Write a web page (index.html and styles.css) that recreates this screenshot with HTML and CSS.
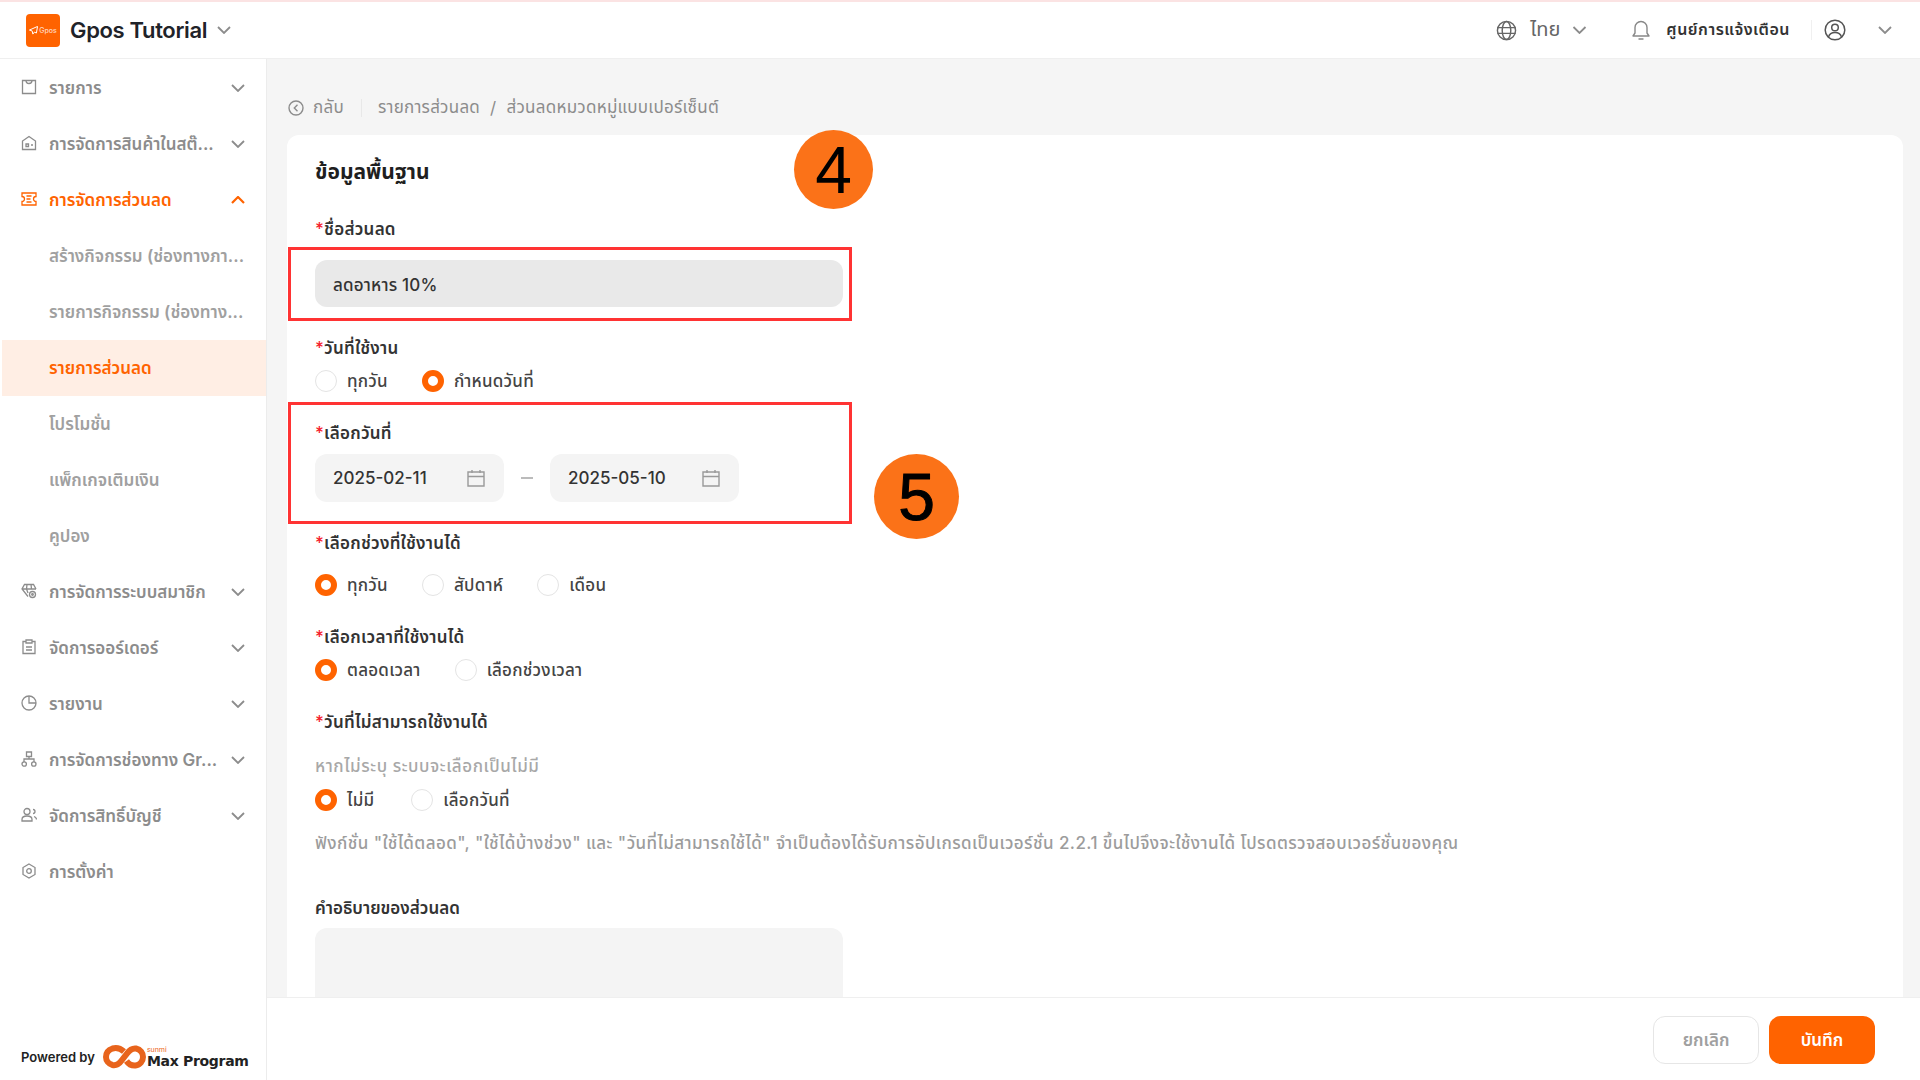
FILE: index.html
```html
<!DOCTYPE html>
<html lang="th">
<head>
<meta charset="utf-8">
<title>Gpos Tutorial</title>
<link rel="stylesheet" href="styles.css">
</head>
<body>
<div class="app">
  <header class="topbar">
    <div class="brand">
      <div class="logo">
        <svg class="logo-plane" viewBox="0 0 10 10"><path d="M9.500 .5 .5 4.500l3 1 .8 3.500 1.700-2.200 2.200 1z" fill="none" stroke="#fff" stroke-width="1.100" stroke-linejoin="round"/></svg>
        <span class="logo-text">Gpos</span>
      </div>
      <span class="brand-name">Gpos Tutorial</span>
      <svg class="chev chev-brand" viewBox="0 0 14 8"><path d="M1 1l6 6 6-6"/></svg>
    </div>
    <div class="top-actions">
      <svg class="top-icon" viewBox="0 0 22 22"><g fill="none" stroke="#666" stroke-width="1.500"><circle cx="11" cy="11" r="9.500"/><ellipse cx="11" cy="11" rx="4.500" ry="9.500"/><path d="M1.500 8h19M1.500 14h19"/></g></svg>
      <span class="lang">ไทย</span>
      <svg class="chev chev-lang" viewBox="0 0 14 8"><path d="M1 1l6 6 6-6"/></svg>
      <svg class="bell" viewBox="0 0 18 22"><path d="M1 17h16l-2-3V8.500a6 6 0 0 0-12 0V14zM7 20h4" fill="none" stroke="#888" stroke-width="1.400" stroke-linejoin="round" stroke-linecap="round"/></svg>
      <span class="notice">ศูนย์การแจ้งเตือน</span>
      <span class="top-divider"></span>
      <svg class="user" viewBox="0 0 22 22"><g fill="none" stroke="#555" stroke-width="1.500"><circle cx="11" cy="11" r="9.800"/><circle cx="11" cy="8.500" r="3.300"/><path d="M4.500 18c1-3.500 3.500-4.500 6.500-4.500s5.500 1 6.500 4.500"/></g></svg>
      <svg class="chev chev-user" viewBox="0 0 14 8"><path d="M1 1l6 6 6-6"/></svg>
    </div>
  </header>

  <div class="body-row">
    <aside class="sidebar">
      <nav class="menu">
        <a class="item"><svg class="mi" viewBox="0 0 16 16"><path d="M1.500 1.500h13v13h-13zM5 1.500c0 4 6 4 6 0"/></svg><span class="mt">รายการ</span><svg class="chev" viewBox="0 0 14 8"><path d="M1 1l6 6 6-6"/></svg></a>
        <a class="item"><svg class="mi" viewBox="0 0 16 16"><path d="M1.500 14.500V6L8 1.500 14.500 6v8.500zM5 9h2.500v2.500H5zM10 10h2"/></svg><span class="mt">การจัดการสินค้าในสต๊...</span><svg class="chev" viewBox="0 0 14 8"><path d="M1 1l6 6 6-6"/></svg></a>
        <a class="item item-open"><svg class="mi" viewBox="0 0 16 16"><path d="M1 2h14v3.500a2.500 2.500 0 0 0 0 5V14H1v-3.500a2.500 2.500 0 0 0 0-5zM5.500 5h5M5.500 8h4M5.500 11h5"/></svg><span class="mt">การจัดการส่วนลด</span><svg class="chev" viewBox="0 0 14 8"><path d="M1 7l6-6 6 6"/></svg></a>
        <a class="item sub"><span class="mt">สร้างกิจกรรม (ช่องทางภา...</span></a>
        <a class="item sub"><span class="mt">รายการกิจกรรม (ช่องทาง...</span></a>
        <a class="item sub sub-active"><span class="mt">รายการส่วนลด</span></a>
        <a class="item sub"><span class="mt">โปรโมชั่น</span></a>
        <a class="item sub"><span class="mt">แพ็กเกจเติมเงิน</span></a>
        <a class="item sub"><span class="mt">คูปอง</span></a>
        <a class="item"><svg class="mi" viewBox="0 0 16 16"><path d="M7 13.500 1 6l2.500-4.500h9L15 6M1 6h14M5.500 6 7 10M6 1.500 5.500 6M10 1.500l.500 4.500"/><circle cx="11.500" cy="11.500" r="3"/><circle cx="11.500" cy="11.500" r=".8"/></svg><span class="mt">การจัดการระบบสมาชิก</span><svg class="chev" viewBox="0 0 14 8"><path d="M1 1l6 6 6-6"/></svg></a>
        <a class="item"><svg class="mi" viewBox="0 0 16 16"><path d="M5 2.500H2v12h12v-12h-3M5 1h6v3H5zM5 8h6M5 11h6"/></svg><span class="mt">จัดการออร์เดอร์</span><svg class="chev" viewBox="0 0 14 8"><path d="M1 1l6 6 6-6"/></svg></a>
        <a class="item"><svg class="mi" viewBox="0 0 16 16"><circle cx="8" cy="8" r="7"/><path d="M8 1v7h7"/></svg><span class="mt">รายงาน</span><svg class="chev" viewBox="0 0 14 8"><path d="M1 1l6 6 6-6"/></svg></a>
        <a class="item"><svg class="mi" viewBox="0 0 16 16"><path d="M5.500 1h5v4.500h-5zM8 5.500V8M3 11V8h10v3"/><circle cx="3.200" cy="13" r="2.200"/><circle cx="12.800" cy="13" r="2.200"/></svg><span class="mt">การจัดการช่องทาง Gr...</span><svg class="chev" viewBox="0 0 14 8"><path d="M1 1l6 6 6-6"/></svg></a>
        <a class="item"><svg class="mi" viewBox="0 0 16 16"><circle cx="6" cy="4.500" r="3"/><path d="M1 14v-1.500c0-2 2-3.500 5-3.500s5 1.500 5 3.500V14zM12 2.500a2 2 0 0 1 0 4M13 9.500c1.500.5 2.500 1.500 2.500 3"/></svg><span class="mt">จัดการสิทธิ์บัญชี</span><svg class="chev" viewBox="0 0 14 8"><path d="M1 1l6 6 6-6"/></svg></a>
        <a class="item"><svg class="mi" viewBox="0 0 16 16"><path d="M8 1l6 3.500v7L8 15l-6-3.500v-7z"/><circle cx="8" cy="8" r="2.300"/></svg><span class="mt">การตั้งค่า</span></a>
      </nav>
      <div class="powered">
        <span class="powered-by">Powered by</span>
        <svg class="max-logo" viewBox="0 0 44 24"><path d="M21 6.500C17 3 13 2.500 9.500 3.500 5 5 3 8.500 3 12s2.500 7 6.500 8c4 .8 7-1.500 9.500-5l5-6.500c2.500-3.500 5-5.500 9-5 4.500 1 7 4.500 7 8.500s-3 8-7.500 8.500c-4 .3-7-1.500-9-4.500" fill="none" stroke="#e8641c" stroke-width="6"/></svg>
        <div class="max-text"><span class="sunmi">sunmi</span><span class="max-name">Max Program</span></div>
      </div>
    </aside>

    <main class="main">
      <div class="crumbs">
        <svg class="back" viewBox="0 0 16 16"><circle cx="8" cy="8" r="7" fill="none" stroke="#8c8c8c" stroke-width="1.400"/><path d="M9.500 4.800 6.300 8l3.200 3.200" fill="none" stroke="#8c8c8c" stroke-width="1.400"/></svg>
        <span class="back-text">กลับ</span>
        <span class="crumb-divider"></span>
        <span>รายการส่วนลด</span>
        <span class="crumb-sep">/</span>
        <span>ส่วนลดหมวดหมู่แบบเปอร์เซ็นต์</span>
      </div>
      <section class="card">
        <h2 class="card-title">ข้อมูลพื้นฐาน</h2>

        <div class="field field-first">
          <label class="label label-wide"><i>*</i>ชื่อส่วนลด</label>
          <div class="text-input">ลดอาหาร 10%</div>
        </div>

        <div class="field">
          <label class="label"><i>*</i>วันที่ใช้งาน</label>
          <div class="radios">
            <span class="radio"><b class="dot"></b>ทุกวัน</span>
            <span class="radio radio-long"><b class="dot on"></b>กำหนดวันที่</span>
          </div>
        </div>

        <div class="field field-date">
          <label class="label"><i>*</i>เลือกวันที่</label>
          <div class="dates">
            <div class="date"><span>2025-02-11</span><svg class="cal" viewBox="0 0 18 18"><path d="M1 3h16v14H1zM1 7.500h16M5 1v3M13 1v3" fill="none" stroke="#999" stroke-width="1.400"/></svg></div>
            <span class="dash"></span>
            <div class="date"><span>2025-05-10</span><svg class="cal" viewBox="0 0 18 18"><path d="M1 3h16v14H1zM1 7.500h16M5 1v3M13 1v3" fill="none" stroke="#999" stroke-width="1.400"/></svg></div>
          </div>
        </div>

        <div class="field">
          <label class="label label-range"><i>*</i>เลือกช่วงที่ใช้งานได้</label>
          <div class="radios">
            <span class="radio"><b class="dot on"></b>ทุกวัน</span>
            <span class="radio"><b class="dot"></b>สัปดาห์</span>
            <span class="radio"><b class="dot"></b>เดือน</span>
          </div>
        </div>

        <div class="field">
          <label class="label"><i>*</i>เลือกเวลาที่ใช้งานได้</label>
          <div class="radios">
            <span class="radio radio-medium"><b class="dot on"></b>ตลอดเวลา</span>
            <span class="radio"><b class="dot"></b>เลือกช่วงเวลา</span>
          </div>
        </div>

        <div class="field">
          <label class="label label-hint"><i>*</i>วันที่ไม่สามารถใช้งานได้</label>
          <div class="hint">หากไม่ระบุ ระบบจะเลือกเป็นไม่มี</div>
          <div class="radios">
            <span class="radio radio-short"><b class="dot on"></b>ไม่มี</span>
            <span class="radio"><b class="dot"></b>เลือกวันที่</span>
          </div>
          <div class="note">ฟังก์ชั่น "ใช้ได้ตลอด", "ใช้ได้บ้างช่วง" และ "วันที่ไม่สามารถใช้ได้" จำเป็นต้องได้รับการอัปเกรดเป็นเวอร์ชั่น 2.2.1 ขึ้นไปจึงจะใช้งานได้ โปรดตรวจสอบเวอร์ชั่นของคุณ</div>
        </div>

        <div class="field field-desc">
          <label class="label label-plain">คำอธิบายของส่วนลด</label>
          <div class="textarea"></div>
        </div>

        <div class="mark mark-name"></div>
        <div class="mark mark-date"></div>
        <div class="badge badge-4">4</div>
        <div class="badge badge-5">5</div>
      </section>
      <footer class="footer">
        <button class="btn btn-cancel">ยกเลิก</button>
        <button class="btn btn-save">บันทึก</button>
      </footer>
    </main>
  </div>
</div>
</body>
</html>
```

FILE: styles.css
```css
* { box-sizing: border-box; }
html, body { margin: 0; height: 100%; }
body {
  font-family: "Inter", "Noto Sans", "Noto Sans Thai", "DejaVu Sans", sans-serif;
  font-size: 17px;
  color: #262626;
  background: #fff;
  overflow: hidden;
}
.app { width: 1920px; height: 1080px; display: flex; flex-direction: column; border-top: 2px solid #fbe3e3; }

/* top bar */
.topbar { height: 57px; flex: none; display: flex; align-items: center; justify-content: space-between; border-bottom: 1px solid #efefef; padding: 0 28px 0 26px; }
.brand { display: flex; align-items: center; }
.logo { width: 34px; height: 33px; border-radius: 4px; background: #ff6300; display: flex; align-items: center; justify-content: center; gap: 1px; color: #fff; }
.logo-plane { width: 9px; height: 9px; }
.logo-text { font-size: 7px; color: #ffd9c2; font-weight: 500; }
.brand-name { margin-left: 10px; font-size: 22px; font-weight: 600; color: #1f2329; letter-spacing: -.35px; }
.chev { width: 14px; height: 8px; fill: none; stroke: #8c8c8c; stroke-width: 1.800; flex: none; }
.chev-brand { margin-left: 10px; }
.top-actions { display: flex; align-items: center; }
.top-icon { width: 21px; height: 21px; }
.lang { margin-left: 13px; color: #666; font-size: 20px; }
.chev-lang { margin-left: 12px; width: 15px; }
.bell { width: 18px; height: 22px; margin-left: 45px; }
.notice { margin-left: 16px; font-weight: 600; color: #333; font-size: 16px; letter-spacing: .5px; }
.top-divider { width: 1px; height: 20px; background: #f0f0f0; margin-left: 21px; }
.user { width: 22px; height: 22px; margin-left: 12px; }
.chev-user { margin-left: 32px; }

/* layout */
.body-row { flex: 1; display: flex; min-height: 0; }
.sidebar { width: 267px; flex: none; border-right: 1px solid #ececec; padding: 1px 0 0 2px; display: flex; flex-direction: column; justify-content: space-between; }
.menu { display: flex; flex-direction: column; }
.item { height: 56px; display: flex; align-items: center; padding: 0 21px 0 19px; color: #8c8c8c; font-weight: 600; font-size: 17px; white-space: nowrap; }
.mi { width: 16px; height: 16px; flex: none; margin: -2px 12px 0 0; fill: none; stroke: #8c8c8c; stroke-width: 1.300; }
.mt { flex: 1; min-width: 0; overflow: hidden; padding-top: 2px; }
.item-open { color: #ff6300; }
.item-open .mi, .item-open .chev { stroke: #ff6300; }
.item-open .chev { stroke-width: 2.200; }
.sub { padding-left: 47px; padding-right: 0; color: #a0a0a0; }
.sub-active { background: #ffeee4; color: #ff6300; }
.powered { height: 60px; display: flex; align-items: center; padding: 14px 0 0 19px; }
.powered-by { font-size: 13px; font-weight: 600; color: #222; }
.max-logo { width: 44px; height: 24px; margin-left: 8px; }
.max-text { display: flex; flex-direction: column; margin-left: 0; line-height: 1; }
.sunmi { font-size: 7px; color: #ec6417; margin-bottom: 1px; }
.max-name { font-family: "DejaVu Sans", sans-serif; font-size: 14px; font-weight: 700; color: #222; letter-spacing: -.3px; }

/* main */
.main { flex: 1; min-width: 0; background: #f5f5f5; padding: 38px 17px 0 20px; display: flex; flex-direction: column; position: relative; }
.crumbs { height: 20px; display: flex; align-items: center; color: #8c8c8c; font-size: 17px; letter-spacing: .25px; margin-bottom: 18px; flex: none; padding: 1px 0 0 1px; }
.back { width: 16px; height: 16px; margin-right: 9px; }
.crumb-divider { width: 1px; height: 18px; background: #e8e8e8; margin: 0 16px 0 17px; }
.crumb-sep { margin: 0 10px; }

.card { background: #fff; border-radius: 12px 12px 0 0; padding: 23px 28px 0; flex: 1; min-height: 0; position: relative; }
.card-title { margin: 0; font-size: 21px; line-height: 28px; font-weight: 700; color: #1f1f1f; }
.field { margin-top: 29px; }
.field-first { margin-top: 32px; margin-bottom: 30px; }
.field-date { margin-bottom: 30px; }
.field-desc { margin-top: 44px; }
.label { display: block; height: 20px; padding-top: 1px; line-height: 20px; font-weight: 600; color: #333; margin-bottom: 12px; letter-spacing: .25px; }
.label i { color: #f5222d; font-style: normal; font-weight: 500; }
.label-wide { margin-bottom: 22px; }
.label-range { margin-bottom: 21px; }
.label-hint { margin-bottom: 25px; }
.label-plain { margin-bottom: 11px; letter-spacing: 0; }
.text-input { width: 528px; height: 47px; border-radius: 12px; background: #e9e9e9; display: flex; align-items: center; padding: 4px 0 0 18px; color: #333; font-weight: 500; letter-spacing: .2px; }
.radios { display: flex; height: 24px; align-items: center; }
.radio { display: flex; align-items: center; font-weight: 500; color: #444; margin-right: 34px; padding-top: 2px; white-space: nowrap; letter-spacing: .25px; }
.radio-short { margin-right: 37px; }
.dot { width: 22px; height: 22px; border-radius: 50%; border: 1px solid #e4e4e4; margin: -2px 10px 0 0; background: #fff; flex: none; }
.dot.on { border: 6px solid #ff6300; }
.dates { display: flex; align-items: center; }
.date { width: 189px; height: 48px; border-radius: 12px; background: #f4f4f4; display: flex; align-items: center; justify-content: space-between; padding: 0 19px 0 18px; color: #333; font-weight: 500; }
.cal { width: 18px; height: 18px; }
.dash { width: 12px; height: 2px; background: #bbb; margin: 0 17px; }
.hint { line-height: 20px; color: #a8a8a8; font-weight: 500; margin-bottom: 12px; letter-spacing: .55px; }
.note { line-height: 20px; color: #9c9c9c; font-weight: 500; margin-top: 21px; white-space: nowrap; letter-spacing: .42px; }
.textarea { width: 528px; height: 140px; border-radius: 12px; background: #f4f4f4; }

/* annotations */
.mark { position: absolute; border: 3px solid #ff3333; width: 564px; }
.mark-name { left: 1px; top: 112px; height: 74px; }
.mark-date { left: 1px; top: 267px; height: 122px; }
.badge { position: absolute; border-radius: 50%; background: #fb7218; color: #000; font-family: "Liberation Sans", sans-serif; display: flex; align-items: center; justify-content: center; font-size: 66px; }
.badge-4 { left: 507px; top: -5px; width: 79px; height: 79px; }
.badge-5 { left: 587px; top: 319px; width: 85px; height: 85px; -webkit-text-stroke: 1px #000; }

/* footer */
.footer { position: absolute; left: 0; right: 0; bottom: 0; height: 83px; background: #fff; border-top: 1px solid #efefef; display: flex; align-items: center; justify-content: flex-end; padding: 2px 45px 0 0; gap: 10px; }
.btn { width: 106px; height: 48px; border-radius: 12px; font-family: inherit; font-size: 17px; font-weight: 600; padding: 2px 0 0; }
.btn-cancel { background: #fff; border: 1px solid #e6e6e6; color: #a0a0a0; }
.btn-save { background: #ff6300; border: none; color: #fff; }
```
